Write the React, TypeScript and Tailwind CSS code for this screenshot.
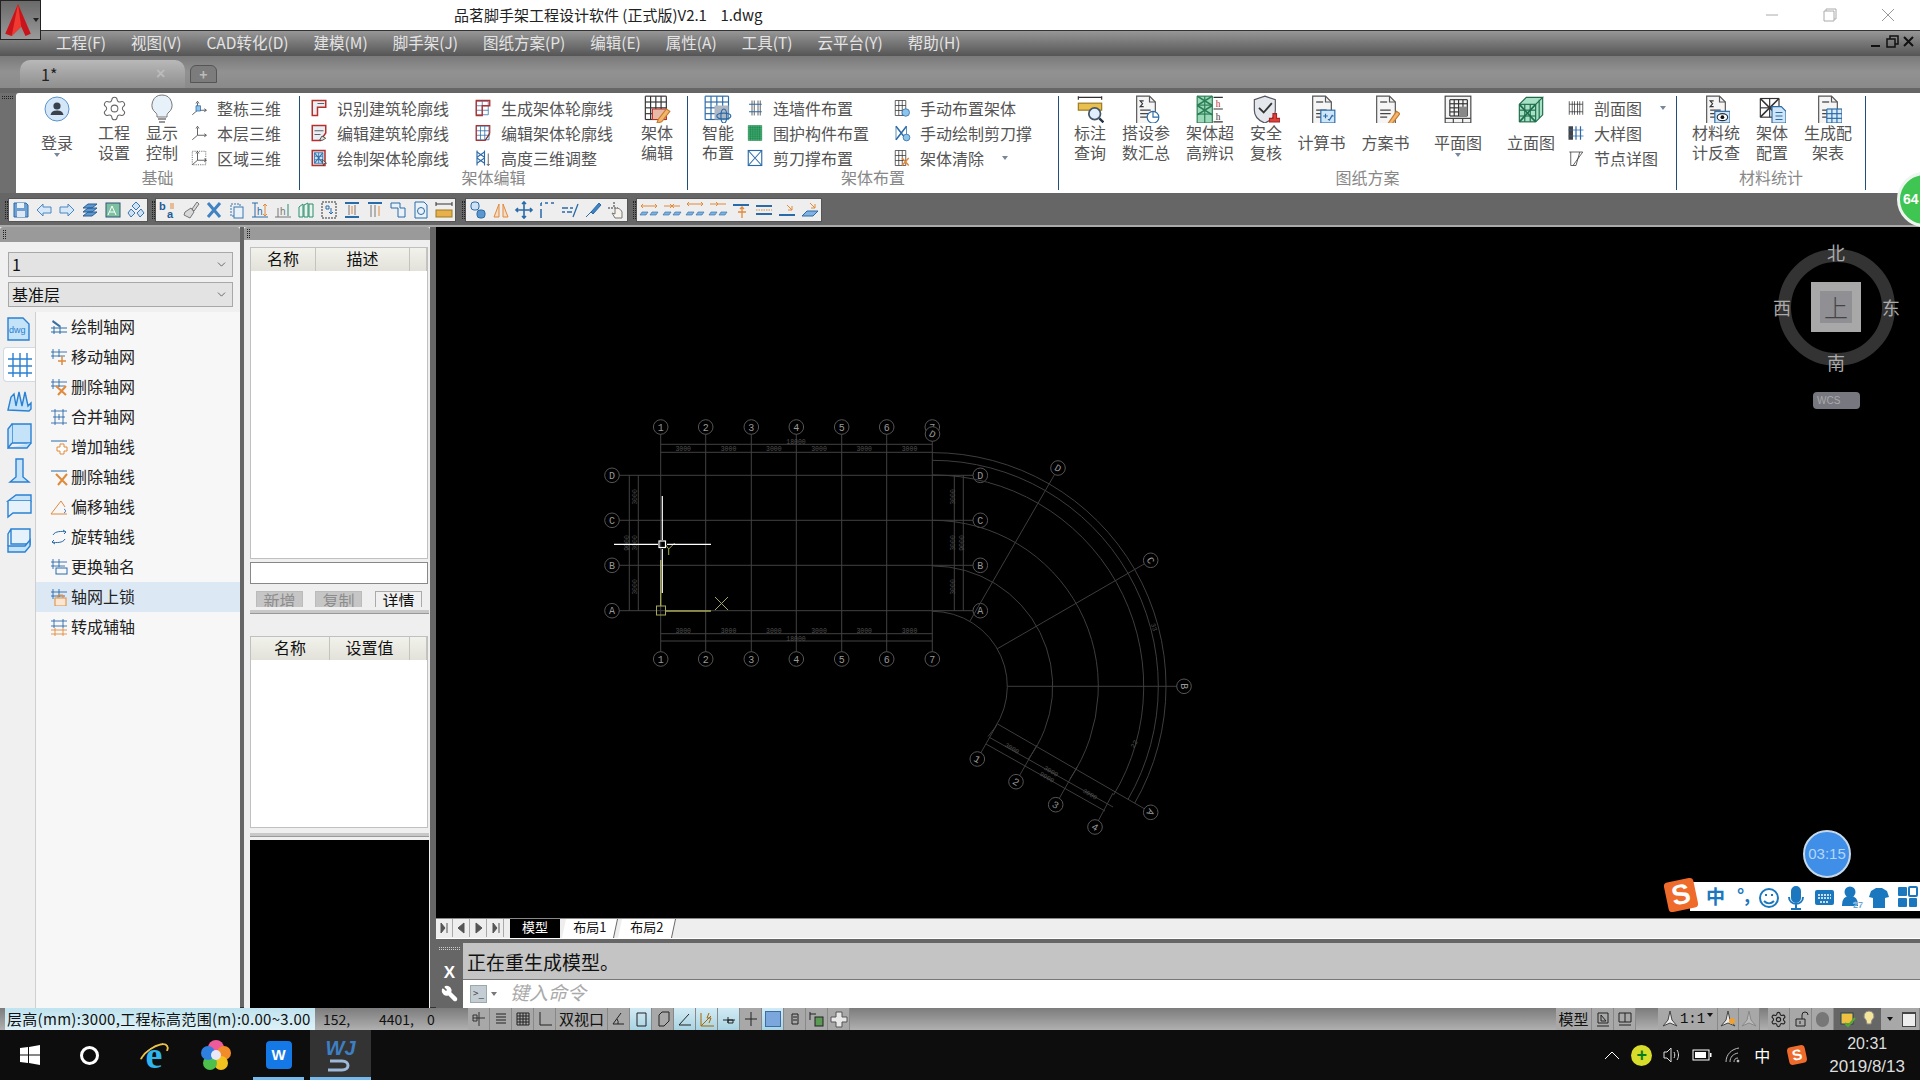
import type { ReactNode } from "react";
import { ChevronDown, Settings, Wrench } from "lucide-react";

const R = "#b5302b";
const B = "#2a6aa8";
const O = "#e08a3c";
const G = "#3fae6e";
const K = "#333";

const S = ({ s = 18, v = 24, children }: { s?: number; v?: number; children: ReactNode }) => (
  <svg width={s} height={s} viewBox={`0 0 ${v} ${v}`} fill="none" className="shrink-0">
    {children}
  </svg>
);

const Grid = ({ x, y, w, h, nx, ny, c = B, sw = 1 }: { x: number; y: number; w: number; h: number; nx: number; ny: number; c?: string; sw?: number }) => (
  <g stroke={c} strokeWidth={sw}>
    {Array.from({ length: nx + 1 }).map((_, i) => (
      <line key={"v" + i} x1={x + (w * i) / nx} x2={x + (w * i) / nx} y1={y} y2={y + h} />
    ))}
    {Array.from({ length: ny + 1 }).map((_, i) => (
      <line key={"h" + i} x1={x} x2={x + w} y1={y + (h * i) / ny} y2={y + (h * i) / ny} />
    ))}
  </g>
);

const Cross = ({ x, y, w, h, c = B }: { x: number; y: number; w: number; h: number; c?: string }) => (
  <path d={`M${x} ${y}L${x + w} ${y + h}M${x + w} ${y}L${x} ${y + h}`} stroke={c} strokeWidth="1.4" />
);

const Doc = ({ sum = false }: { sum?: boolean }) => (
  <>
    <path d="M4 1h11l5 5v19H4z" fill="#f5f5f5" stroke="#555" />
    <path d="M15 1v5h5" stroke="#555" />
    {sum ? <path d="M10 5H7l2 2.5L7 10h3" stroke="#333" /> : <path d="M7 6h6" stroke="#333" />}
    <path d="M7 13h9M7 16h9M7 19h6" stroke="#444" />
  </>
);

const Axes = ({ box = false, dash = false }: { box?: boolean; dash?: boolean }) => (
  <S>
    {dash && <rect x="3" y="3" width="18" height="18" stroke="#444" strokeDasharray="1.5 1.5" />}
    <path d="M10 15V5M10 15h11M10 15l-7 6" stroke={K} />
    <path d="M8 6l2-3 2 3M19 13l3 2-3 2" stroke={K} />
    {box && <path d="M8 9h6v7H8z" fill="#8ec3ea" stroke={B} />}
  </S>
);

const big: Record<string, ReactNode> = {
  login: (
    <svg width="26" height="26" viewBox="0 0 26 26">
      <circle cx="13" cy="13" r="12" fill="#d4e7f8" stroke="#5a92cc" />
      <circle cx="13" cy="10" r="3.6" fill="#39414d" />
      <path d="M6.5 19c1-4 4-4.500 6.500-4.500s5.500.5 6.500 4.500z" fill="#39414d" />
    </svg>
  ),
  gear: <Settings size={27} strokeWidth={0.9} color="#666" />,
  bulb: (
    <svg width="26" height="30" viewBox="0 0 26 30" fill="none">
      <path d="M13 1a10 10 0 0 1 6 18c-1 1-1 2-1 4H8c0-2 0-3-1-4A10 10 0 0 1 13 1z" fill="#e6f1fa" stroke="#777" />
      <path d="M9 25h8M10 28h6" stroke="#777" strokeWidth="1.5" />
    </svg>
  ),
  edit: (
    <S s={28}>
      <Grid x={2} y={1} w={18} h={20} nx={4} ny={4} c={K} />
      <path d="M8 12h12v9H8z" fill="#e9b9a8" stroke={R} />
      <path d="M13 21l7-9 3 2-7 9-4 1z" fill="#f2b56b" stroke="#c77a2c" />
    </S>
  ),
  smart: (
    <S s={28}>
      <Grid x={1} y={1} w={20} h={20} nx={4} ny={4} />
      <rect x="9" y="9" width="12" height="12" fill="#aeb8c4" />
      <ellipse cx="17" cy="18" rx="6" ry="2.500" stroke={B} />
      <ellipse cx="17" cy="18" rx="2.500" ry="6" stroke={B} />
    </S>
  ),
  measure: (
    <S s={28}>
      <path d="M2 2h20M2 1v3M22 1v3" stroke={K} />
      <rect x="2" y="7" width="20" height="6" fill="#e9bf4d" stroke="#9a7a20" />
      <circle cx="16" cy="16" r="5" fill="#dfeefa" stroke="#456" strokeWidth="1.5" />
      <path d="M20 20l3.500 3.500" stroke="#234" strokeWidth="2" />
    </S>
  ),
  params: (
    <S s={28}>
      <Doc sum />
      <circle cx="18" cy="19" r="5" fill="#fff" stroke={B} />
      <path d="M18 14v5h5" stroke={B} />
    </S>
  ),
  high: (
    <S s={28}>
      <rect x="1" y="1" width="13" height="23" fill="#9bd8b8" />
      <Grid x={1} y={1} w={13} h={23} nx={2} ny={3} c="#2b7d55" />
      <Cross x={1} y={1} w={13} h={8} c="#2b7d55" />
      <Cross x={1} y={9} w={13} h={8} c="#2b7d55" />
      <path d="M15 2h8M15 12h8M15 23h8" stroke={K} />
      <text x="17" y="10" fontSize="8" fill={R} fontFamily="Liberation Serif">h</text>
      <text x="17" y="21" fontSize="8" fill={K} fontFamily="Liberation Serif">h</text>
    </S>
  ),
  safe: (
    <S s={28}>
      <path d="M11 1l9 3v9c0 6-4 9-9 11-5-2-9-5-9-11V4z" fill="#e4e8ec" stroke="#556" />
      <path d="M6 11l4 4 7-8" stroke="#333" strokeWidth="1.600" />
      <path d="M15 23h9v-3h-3v-4h-3v4h-3z" fill="#e0403a" stroke="#a22" />
    </S>
  ),
  calc: (
    <S s={28}>
      <Doc />
      <rect x="11" y="13" width="12" height="11" fill="#cfe6f8" stroke={B} />
      <path d="M13 18h4M15 16v4M18 22l3-5M17 21h1M21 18h1" stroke={B} />
    </S>
  ),
  plan: (
    <S s={28}>
      <Doc />
      <path d="M14 24l7-10 3 2-7 9-4 1z" fill="#f2b56b" stroke="#c77a2c" />
    </S>
  ),
  floor: (
    <S s={28}>
      <rect x="1" y="1" width="22" height="23" fill="#f4f4f4" stroke="#444" />
      <Grid x={5} y={4} w={15} h={14} nx={4} ny={4} c="#333" />
      <rect x="13" y="10" width="7" height="8" fill="#888" />
      <path d="M1 20h22M8 20v4M16 20v4" stroke="#444" />
    </S>
  ),
  elev: (
    <S s={28}>
      <path d="M2 8l6-6h14v15l-6 6H2z" fill="#a7e0c5" />
      <Grid x={2} y={8} w={14} h={15} nx={3} ny={3} c="#1e6d4a" />
      <Cross x={2} y={8} w={14} h={15} c="#1e6d4a" />
      <path d="M2 8l6-6h14l-6 6M22 2v15l-6 6M19 4v16" stroke="#1e6d4a" />
    </S>
  ),
  matLook: (
    <S s={28}>
      <Doc sum />
      <rect x="11" y="14" width="13" height="10" fill="#cfe6f8" stroke={B} />
      <ellipse cx="17.500" cy="19" rx="4.500" ry="3" fill="#fff" stroke="#234" />
      <circle cx="17.500" cy="19" r="1.600" fill="#111" />
    </S>
  ),
  rackCfg: (
    <S s={28}>
      <Grid x={2} y={3} w={16} h={16} nx={2} ny={2} c={K} />
      <Cross x={2} y={3} w={16} h={16} c={K} />
      <path d="M12 10h8l4 4v10H12z" fill="#cfe6f8" stroke={B} />
      <path d="M15 15h6M15 18h6M15 21h6" stroke={B} />
    </S>
  ),
  genTable: (
    <S s={28}>
      <Doc />
      <rect x="11" y="12" width="13" height="12" fill="#d7ebfa" />
      <Grid x={11} y={12} w={13} h={12} nx={3} ny={3} />
    </S>
  ),
};

const small: Record<string, ReactNode> = {
  a1: <Axes box />,
  a2: <Axes />,
  a3: <Axes dash />,
  o1: <S><path d="M3 2h18v9H10v11H3z" fill="#e8eef4" stroke={R} strokeWidth="2" /><path d="M10 6h9" stroke={K} /></S>,
  o2: <S><path d="M3 2h18v10l-7 10H3z" fill="#e8eef4" stroke={R} strokeWidth="2" /><path d="M6 9h12M6 14h8" stroke={K} /><path d="M13 21l3-5 5 3-5 3z" fill="#ddd" stroke={K} /></S>,
  o3: <S><rect x="3" y="2" width="17" height="20" fill="#cfe0f0" stroke={R} strokeWidth="2" /><Grid x={6} y={5} w={11} h={14} nx={2} ny={3} /><Cross x={6} y={5} w={11} h={14} /><path d="M16 14l6 5-3 0-1 3z" fill="#fff" stroke={K} /></S>,
  g1: <S><Grid x={3} y={3} w={16} h={18} nx={2} ny={3} /><path d="M3 2h18v7H11v13H3z" stroke={R} strokeWidth="1.800" /></S>,
  g2: <S><Grid x={3} y={3} w={17} h={18} nx={3} ny={3} /><path d="M3 2h18v10l-6 10H3z" stroke={R} strokeWidth="1.600" /><path d="M15 21l6-7" stroke={K} /></S>,
  g3: <S><path d="M4 2v20M14 2v20" stroke={B} strokeWidth="1.500" /><Cross x={4} y={4} w={10} h={7} /><Cross x={4} y={12} w={10} h={7} /><path d="M19 6v16M17 20l2 2 2-2" stroke={K} /></S>,
  w1: <S><path d="M8 2v20M11 2v20M16 2v20M19 2v20" stroke={K} /><path d="M4 7h17M4 17h17" stroke={B} strokeWidth="1.500" /></S>,
  w2: <S><rect x="3" y="2" width="18" height="20" fill={G} /><Grid x={3} y={2} w={18} h={20} nx={6} ny={7} c="#1f7f4c" sw={0.7} /></S>,
  w3: <S><rect x="3" y="2" width="18" height="20" stroke={B} strokeWidth="1.500" /><Cross x={3} y={2} w={18} h={20} /></S>,
  h1: <S><Grid x={3} y={2} w={14} h={20} nx={3} ny={3} c={K} /><circle cx="17" cy="18" r="5" fill="#8ec3ea" stroke={B} /></S>,
  h2: <S><path d="M4 3l14 18M18 3L4 21" stroke={B} strokeWidth="2" /><path d="M4 3v18M18 3v18" stroke={B} /><circle cx="18" cy="18" r="4.500" fill="#8ec3ea" stroke={B} /></S>,
  h3: <S><Grid x={3} y={2} w={14} h={20} nx={3} ny={3} c={K} /><path d="M12 12l9 10M21 12l-9 10" stroke={O} strokeWidth="2" /></S>,
  s1: <S><path d="M3 3v18M7 3v18M10 3v18M14 3v18M17 3v18M21 3v18" stroke={K} /><path d="M3 7h18M3 17h18" stroke={K} /></S>,
  s2: <S><rect x="2" y="3" width="6" height="18" fill="#444" /><path d="M12 3v18M18 3v18" stroke={B} strokeWidth="1.600" /><path d="M2 8h20M2 16h20" stroke={B} /></S>,
  s3: <S><path d="M3 4h18M5 22V4M21 4L8 22M12 22l5-18M5 22h7" stroke={K} /></S>,
};

type BigProps = { w: string; icon: string; lines: string[]; caret?: boolean };
const Big = ({ w, icon, lines, caret }: BigProps) => (
  <div className={`flex flex-col items-center shrink-0 ${w}`}>
    <div className="h-[27px] flex items-center justify-center">{big[icon]}</div>
    <div className={`text-center whitespace-nowrap ${lines.length === 1 ? "mt-[10px]" : ""}`}>
      {lines.map((l) => (
        <div key={l} className="leading-[20px]">{l}</div>
      ))}
    </div>
    {caret && <div className="mt-[1px] w-0 h-0 border-x-[3px] border-x-transparent border-t-[4px] border-t-[#78879b]" />}
  </div>
);

const Col = ({ w, rows }: { w: string; rows: [string, string, boolean?][] }) => (
  <div className={`shrink-0 ${w}`}>
    {rows.map(([ic, t, caret]) => (
      <div key={t} className="h-[25px] flex items-center">
        <div className="w-[18px] flex justify-center">{small[ic]}</div>
        <span className="ml-[9px] whitespace-nowrap">{t}</span>
        {caret && <div className="ml-[18px] w-0 h-0 border-x-[3px] border-x-transparent border-t-[4px] border-t-[#78879b]" />}
      </div>
    ))}
  </div>
);

const Group = ({ w, pl, label, children }: { w: string; pl: string; label: string; children: ReactNode }) => (
  <div className={`my-[3px] border-r border-[#1f4f7e] shrink-0 ${w}`}>
    <div className={`flex h-[75px] -mt-[1px] ${pl}`}>{children}</div>
    <div className="h-[14px] leading-[14px] text-center text-[#888]">{label}</div>
  </div>
);

const Ribbon = () => (
  <div className="h-[100px] flex bg-[#6f6f6f]">
    <div className="w-[16px] shrink-0 pt-[3px] pl-[2px]">
      <div className="w-[11px] h-[3px] border-y border-dotted border-[#222]" />
    </div>
    <div className="flex-1 flex bg-white rounded-tl-[3px] text-[16px] text-[#555]">
      <Group w="w-[284px]" pl="pl-[9px]" label="基础">
        <Big w="w-[64px]" icon="login" lines={["登录"]} caret />
        <Big w="w-[50px]" icon="gear" lines={["工程", "设置"]} />
        <Big w="w-[46px]" icon="bulb" lines={["显示", "控制"]} />
        <div className="ml-[5px]">
          <Col w="w-[100px]" rows={[["a1", "整栋三维"], ["a2", "本层三维"], ["a3", "区域三维"]]} />
        </div>
      </Group>
      <Group w="w-[388px]" pl="pl-[10px]" label="架体编辑">
        <Col w="w-[164px]" rows={[["o1", "识别建筑轮廓线"], ["o2", "编辑建筑轮廓线"], ["o3", "绘制架体轮廓线"]]} />
        <Col w="w-[158px]" rows={[["g1", "生成架体轮廓线"], ["g2", "编辑架体轮廓线"], ["g3", "高度三维调整"]]} />
        <Big w="w-[50px]" icon="edit" lines={["架体", "编辑"]} />
      </Group>
      <Group w="w-[371px]" pl="pl-[7px]" label="架体布置">
        <Big w="w-[46px]" icon="smart" lines={["智能", "布置"]} />
        <div className="ml-[5px]">
          <Col w="w-[147px]" rows={[["w1", "连墙件布置"], ["w2", "围护构件布置"], ["w3", "剪刀撑布置"]]} />
        </div>
        <Col w="w-[160px]" rows={[["h1", "手动布置架体"], ["h2", "手动绘制剪刀撑"], ["h3", "架体清除", true]]} />
      </Group>
      <Group w="w-[618px]" pl="pl-[3px]" label="图纸方案">
        <Big w="w-[56px]" icon="measure" lines={["标注", "查询"]} />
        <Big w="w-[56px]" icon="params" lines={["搭设参", "数汇总"]} />
        <Big w="w-[72px]" icon="high" lines={["架体超", "高辨识"]} />
        <Big w="w-[40px]" icon="safe" lines={["安全", "复核"]} />
        <Big w="w-[71px]" icon="calc" lines={["计算书"]} />
        <Big w="w-[57px]" icon="plan" lines={["方案书"]} />
        <Big w="w-[88px]" icon="floor" lines={["平面图"]} caret />
        <Big w="w-[58px]" icon="elev" lines={["立面图"]} />
        <div className="ml-[7px]">
          <Col w="w-[105px]" rows={[["s1", "剖面图", true], ["s2", "大样图"], ["s3", "节点详图"]]} />
        </div>
      </Group>
      <Group w="w-[189px]" pl="pl-[3px]" label="材料统计">
        <Big w="w-[72px]" icon="matLook" lines={["材料统", "计反查"]} />
        <Big w="w-[40px]" icon="rackCfg" lines={["架体", "配置"]} />
        <Big w="w-[72px]" icon="genTable" lines={["生成配", "架表"]} />
      </Group>
    </div>
  </div>
);

const T = ({ children }: { children: ReactNode }) => (
  <div className="w-[23px] h-[22px] flex justify-center items-center shrink-0">
    <svg width="20" height="20" viewBox="0 0 20 20" fill="none">{children}</svg>
  </div>
);

const dimRow = (top: ReactNode) => (
  <T>
    {top}
    <path d="M1 15l2-3h6l-2 3zM11 15l2-3h6l-2 3z" fill="#7fb2e0" stroke={B} strokeWidth="0.600" />
  </T>
);

const tools: ReactNode[][] = [
  [
    <T><path d="M3 3h12l2 2v12H3z" fill="#6f9ed0" stroke={B} /><rect x="6" y="3" width="7" height="5" fill="#e8f0f8" /><rect x="6" y="11" width="8" height="6" fill="#dfe8f2" /></T>,
    <T><path d="M9 4L3 10l6 6v-3h8V7H9z" fill="#d6e8f8" stroke="#4a86c0" /></T>,
    <T><path d="M11 4l6 6-6 6v-3H3V7h8z" fill="#d6e8f8" stroke="#4a86c0" /></T>,
    <T><path d="M3 8l5-4h9l-5 4zM3 12l5-4h9l-5 4zM3 16l5-4h9l-5 4z" fill="#5b96cf" stroke="#2a5f94" /></T>,
    <T><rect x="3" y="3" width="14" height="14" fill="#7cc2a0" stroke="#357" /><path d="M5 15l4-9 4 9M7 12h5" stroke="#fff" /></T>,
    <T><path d="M10 2l4 4-4 4-4-4zM5 9l4 4-4 4-3-4zM15 9l3 4-4 4-3-4z" fill="#cfe2f4" stroke="#3a76b0" /></T>,
  ],
  [
    <T><text x="1" y="10" fontSize="11" fill="#1f5c96" fontWeight="700" fontFamily="Liberation Sans">b</text><text x="9" y="18" fontSize="11" fill="#1f5c96" fontWeight="700" fontFamily="Liberation Sans">a</text><path d="M13 3v6M15 3v6" stroke={O} /></T>,
    <T><path d="M11 9l5-7 2 2-5 7zM4 12l6-4 3 4-4 6-6-3z" fill="#d8d8d8" stroke="#777" /></T>,
    <T><path d="M4 3l12 14M16 3L4 17" stroke="#3f83c2" strokeWidth="3" /></T>,
    <T><rect x="4" y="4" width="9" height="12" stroke="#3a76b0" strokeDasharray="2 1" /><rect x="7" y="7" width="9" height="11" fill="#eaf2f9" stroke="#3a76b0" /></T>,
    <T><path d="M2 3h6M2 17h16M5 3v14" stroke={B} /><text x="7" y="15" fontSize="10" fill={B} fontFamily="Liberation Sans">h</text><path d="M15 4v12M13 6l2-2 2 2M13 14l2 2 2-2" stroke={O} /></T>,
    <T><path d="M2 17h16M5 8v9" stroke="#777" /><text x="7" y="15" fontSize="10" fill="#777" fontFamily="Liberation Sans">h</text><path d="M15 4v12" stroke="#2b8d6e" /></T>,
    <T><path d="M3 7l4-3v13H3zM8 5l4-2v14H8zM13 4h4v13h-4z" fill="#e8f4ec" stroke="#2b8d6e" /></T>,
    <T><rect x="3" y="2" width="14" height="16" stroke="#333" strokeDasharray="2 1" /><path d="M7 6h3v3H7zM12 8v6M10 12l2 2 2-2" stroke={B} /></T>,
    <T><path d="M3 3h14M3 17h14" stroke={B} strokeWidth="2" /><path d="M7 5v10M13 5v10" stroke="#777" /><path d="M10 6v8" stroke={O} /></T>,
    <T><path d="M3 3h14" stroke={B} strokeWidth="2" /><path d="M6 5v12M10 5v12" stroke="#777" /><path d="M14 6v10" stroke={O} /></T>,
    <T><path d="M3 3h9v5h5v9h-7v-9H3z" fill="#eaf2f9" stroke={B} /></T>,
    <T><path d="M4 2h9l3 3v13H4z" fill="#eaf2f9" stroke={B} /><circle cx="10" cy="11" r="3.500" stroke={B} /></T>,
    <T><rect x="2" y="10" width="16" height="7" fill="#e8b04d" stroke="#9a7a20" /><path d="M2 4h16M2 2v4M18 2v4" stroke={K} /></T>,
  ],
  [
    <T><rect x="3" y="2" width="8" height="8" rx="3" fill="#cfe2f4" stroke={B} /><rect x="9" y="10" width="8" height="8" rx="3" fill="#5b96cf" stroke={B} /></T>,
    <T><path d="M8 4L3 17h5zM12 4l5 13h-5z" fill="#f6dcc0" stroke={O} /></T>,
    <T><path d="M10 2v16M2 10h16M8 4l2-2 2 2M8 16l2 2 2-2M4 8l-2 2 2 2M16 8l2 2-2 2" stroke="#2a6aa8" strokeWidth="1.600" /></T>,
    <T><path d="M4 18V9M4 6V3M8 3h3M14 3h3M4 3h1" stroke={B} strokeWidth="1.500" /></T>,
    <T><path d="M2 8h6M10 8h3M2 12h3M7 12h5M13 17l5-13" stroke={B} strokeWidth="1.300" /></T>,
    <T><path d="M3 17l5-5M8 12l8-9 2 2-8 9z" fill="#3f83c2" stroke={B} /></T>,
    <T><path d="M8 2v6M2 8h10" stroke={K} strokeDasharray="2 1" /><path d="M9 9c2-2 6 0 7 3v6H9l-3-5 3 1z" fill="#f8f3ea" stroke="#777" /></T>,
  ],
  [
    dimRow(<path d="M2 6h16M4 4L2 6l2 2M16 4l2 2-2 2" stroke={O} />),
    dimRow(<path d="M2 6h16M8 4l2 2-2 2M12 4l-2 2 2 2" stroke={O} />),
    dimRow(<path d="M2 4h16M4 2L2 4l2 2M16 2l2 2-2 2" stroke={O} />),
    dimRow(<path d="M2 4h16M8 2l2 2-2 2" stroke={O} />),
    <T><path d="M2 5h16" stroke={B} strokeWidth="2" /><path d="M11 7v11M7 12h8M9 9l2-2 2 2" stroke={O} strokeWidth="1.300" /></T>,
    <T><path d="M2 6h16M2 14h16" stroke={B} strokeWidth="2" /><path d="M2 10h16" stroke={O} strokeDasharray="1.500 1" /></T>,
    <T><path d="M2 15h16" stroke={B} strokeWidth="2" /><path d="M10 5l5 5M15 6v4h-4" stroke={O} /></T>,
    <T><path d="M2 16l5-5h11l-5 5z" fill="#7fb2e0" stroke={B} /><path d="M10 3l5 5M15 4v4h-4" stroke={O} /></T>,
  ],
];

const Grip = () => (
  <div className="w-[6px] h-[22px] flex justify-center items-center shrink-0">
    <div className="w-[3px] h-[18px] border-x border-dotted border-[#222]" />
  </div>
);

const Toolbars = () => (
  <div className="h-[32px] bg-[#666] pt-[6px] flex pl-[3px]">
    {tools.map((seg, i) => (
      <div key={i} className={`flex ${["", "ml-[3px]", "ml-[5px]", "ml-[4px]"][i]}`}>
        <Grip />
        <div className="h-[22px] flex bg-[#eeeeee] shadow-[0_0_0_1px_#555]">
          {seg.map((t, j) => (
            <div key={j}>{t}</div>
          ))}
        </div>
      </div>
    ))}
  </div>
);

const Select = ({ text }: { text: string }) => (
  <div className="h-[25px] mx-[8px] w-[225px] bg-[#e3e3e3] border border-[#a8a8a8] flex items-center justify-between pl-[3px] pr-[4px] text-[16px] text-[#111]">
    <span className="pb-[2px]">{text}</span>
    <ChevronDown size={13} color="#444" strokeWidth={1.4} />
  </div>
);

const Side = ({ active, children }: { active?: boolean; children: ReactNode }) => (
  <div className={`h-[35px] flex items-center justify-center ${active ? "bg-white border border-r-0 border-[#cfdbe6] rounded-l-[4px]" : ""}`}>
    <svg width="28" height="28" viewBox="0 0 28 28" fill="#c4e2f8" stroke="#2a80d2" strokeWidth="1.400">{children}</svg>
  </div>
);

const sideIcons: ReactNode[] = [
  <><path d="M3 2h15l6 6v16H3z" /><text x="4" y="17" fontSize="9" fill="#2a80d2" stroke="none" fontFamily="Liberation Sans">dwg</text></>,
  <path d="M2 8h24M2 15h24M2 22h24M7 2v24M14 2v24M21 2v24" fill="none" />,
  <path d="M3 24l3-13 3-3 2 12 3-14 3 14 3-14 3 14 3-3v6l-2 2z" />,
  <><path d="M7 3h19v19H7z" /><path d="M7 3L3 8v19l4-5M3 27h19l4-5" /></>,
  <path d="M11 3h7v18l6 5H5l6-5z" />,
  <><path d="M3 10l8-6h15v6l-23 0z" /><path d="M3 10v16l5-4h18V10" fill="#e6f2fb" /></>,
  <><path d="M6 3h19v15H6zM6 3L3 8v12" fill="#e6f2fb" /><path d="M3 20h17l5-6v6l-5 6H3z" /></>,
];

const listIcon = (accent: ReactNode, lines = true) => (
  <svg width="18" height="18" viewBox="0 0 18 18" fill="none">
    {lines && <path d="M1 4h16M1 8h14M3 1v10M9 1v8" stroke={B} strokeWidth="0.900" />}
    {accent}
  </svg>
);

const listItems: [string, ReactNode][] = [
  ["绘制轴网", <svg width="18" height="18" viewBox="0 0 18 18" fill="none"><path d="M1 10h16M1 14h16M4 8v8M10 8v8" stroke={B} /><path d="M3 2l8 6-2 1-7-5z" fill="#3b6fa0" /></svg>],
  ["移动轴网", listIcon(<path d="M12 8v9M8 13h8" stroke={O} strokeWidth="1.500" />)],
  ["删除轴网", listIcon(<path d="M6 8l10 9M16 8l-8 9" stroke={O} strokeWidth="2" />)],
  ["合并轴网", <svg width="18" height="18" viewBox="0 0 18 18" fill="none"><path d="M1 3h16M1 15h16M5 1v16M13 1v16M3 9h12M9 6v6" stroke={B} strokeWidth="0.900" /></svg>],
  ["增加轴线", <svg width="18" height="18" viewBox="0 0 18 18" fill="none"><path d="M1 3h16" stroke={B} /><path d="M10 6h4v3h3v4h-3v3h-4v-3H7V9h3z" fill="#fff" stroke={O} /></svg>],
  ["删除轴线", <svg width="18" height="18" viewBox="0 0 18 18" fill="none"><path d="M1 3h16" stroke={B} /><path d="M6 6l11 11M17 6L8 17" stroke={O} strokeWidth="2" /></svg>],
  ["偏移轴线", <svg width="18" height="18" viewBox="0 0 18 18" fill="none"><path d="M1 16L11 3l4 6M1 16h16" stroke={O} /><path d="M14 11c2 1 2 3 0 4" stroke={B} /></svg>],
  ["旋转轴线", <svg width="18" height="18" viewBox="0 0 18 18" fill="none"><path d="M3 7c2-4 9-4 13-3M15 11c-2 4-9 4-13 3" stroke={B} /><path d="M13 2l3 2-2 2M5 16l-3-2 2-2" stroke={B} /></svg>],
  ["更换轴名", listIcon(<rect x="6" y="10" width="11" height="6" stroke={B} />)],
  ["轴网上锁", listIcon(<><rect x="5" y="10" width="11" height="8" fill="#fbe6d2" stroke={O} /><path d="M8 10V7h5v3" stroke={O} /></>)],
  ["转成辅轴", <svg width="18" height="18" viewBox="0 0 18 18" fill="none"><path d="M1 3h16M1 8h16M4 1v9M13 1v9" stroke={B} strokeWidth="0.900" /><path d="M1 12h16M1 16h16M5 10v8M13 10v8" stroke={O} strokeWidth="0.900" /></svg>],
];

const LeftPanel = () => (
  <div className="w-[240px] shrink-0 flex flex-col bg-[#f0f0f0]">
    <div className="h-[15px] bg-[#9a9a9a] rounded-t-[3px] pl-[3px] pt-[3px] shrink-0">
      <div className="w-[3px] h-[9px] border-x border-dotted border-[#222]" />
    </div>
    <div className="pt-[10px] flex flex-col gap-[5px] shrink-0">
      <Select text="1" />
      <Select text="基准层" />
    </div>
    <div className="flex-1 flex mt-[5px] min-h-0">
      <div className="w-[36px] shrink-0 pl-[3px] border-r border-[#cfcfcf] flex flex-col">
        {sideIcons.map((ic, i) => (
          <Side key={i} active={i === 1}>{ic}</Side>
        ))}
      </div>
      <div className="flex-1 bg-[#f7f7f7] pb-[4px] text-[16px] text-[#222]">
        {listItems.map(([t, ic], i) => (
          <div key={t} className={`h-[30px] flex items-center pl-[14px] gap-[3px] ${i === 9 ? "bg-[#dce9f5]" : ""}`}>
            <span className="w-[18px] flex justify-center">{ic}</span>
            <span className="pb-[2px]">{t}</span>
          </div>
        ))}
      </div>
    </div>
  </div>
);

const HeadCell = ({ w, t }: { w: string; t?: string }) => (
  <div className={`h-[23px] shrink-0 flex items-center justify-center border-r border-[#c4c4bc] bg-gradient-to-b from-[#f2f2ec] to-[#e2e2da] text-[#111] leading-none pb-[3px] ${w}`}>
    {t}
  </div>
);

const Bar = () => <div className="h-[4px] ml-[6px] mr-[1px] bg-[#c8c8c8] border-b border-[#999]" />;

const MidPanel = () => (
  <div className="w-[186px] ml-[4px] shrink-0 flex flex-col bg-[#efefef] text-[16px]">
    <div className="h-[13px] bg-[#9a9a9a] rounded-t-[3px] pl-[3px] pt-[2px] shrink-0">
      <div className="w-[3px] h-[9px] border-x border-dotted border-[#222]" />
    </div>
    <div className="mt-[7px] ml-[6px] mr-[2px] h-[312px] bg-white border border-[#c0c0c0] flex flex-col shrink-0">
      <div className="flex">
        <HeadCell w="w-[65px]" t="名称" />
        <HeadCell w="w-[94px]" t="描述" />
        <HeadCell w="w-[17px]" />
      </div>
    </div>
    <div className="mt-[3px] ml-[6px] mr-[2px] h-[22px] bg-white border border-[#888] shrink-0" />
    <div className="mt-[7px] h-[16px] flex pl-[12px] overflow-hidden shrink-0">
      <div className="w-[47px] h-[22px] bg-[#c6c6c6] text-[#8c8c8c] border border-[#bbb] text-center leading-[17px]">新增</div>
      <div className="ml-[12px] w-[47px] h-[22px] bg-[#c6c6c6] text-[#8c8c8c] border border-[#bbb] text-center leading-[17px]">复制</div>
      <div className="ml-[13px] w-[47px] h-[22px] bg-[#f0f0f0] text-[#111] border border-[#aaa] text-center leading-[17px]">详情</div>
    </div>
    <div className="mt-[3px] shrink-0"><Bar /></div>
    <div className="mt-[22px] ml-[6px] mr-[2px] h-[192px] bg-white border border-[#c0c0c0] shrink-0">
      <div className="flex">
        <HeadCell w="w-[79px]" t="名称" />
        <HeadCell w="w-[80px]" t="设置值" />
        <HeadCell w="w-[17px]" />
      </div>
    </div>
    <div className="mt-[5px] shrink-0"><Bar /></div>
    <div className="mt-[3px] ml-[6px] mr-[1px] flex-1 bg-black" />
  </div>
);

const cx = 932.3;
const cy = 686.3;
const pt = (r: number, deg: number): [number, number] => [cx + r * Math.cos((deg * Math.PI) / 180), cy - r * Math.sin((deg * Math.PI) / 180)];
const arc = (r: number, a0: number, a1: number) => {
  const [x0, y0] = pt(r, a0);
  const [x1, y1] = pt(r, a1);
  return `M${x0} ${y0}A${r} ${r} 0 0 1 ${x1} ${y1}`;
};

const Bubble = ({ x, y, t, rot = 0 }: { x: number; y: number; t: string; rot?: number }) => (
  <g>
    <circle cx={x} cy={y} r="7.300" stroke="#555" fill="#000" />
    <text x={x} y={y + 3.500} textAnchor="middle" fontSize="10" fill="#999" stroke="none" fontFamily="Liberation Mono" transform={rot ? `rotate(${rot} ${x} ${y})` : undefined}>{t}</text>
  </g>
);

const colsX = [660.7, 705.7, 751.3, 796.3, 841.7, 886.7, 932.3];
const rowsY: [string, number][] = [["D", 475.3], ["C", 520.3], ["B", 565.3], ["A", 610.7]];

const Dim = ({ x, y, t, rot = 0 }: { x: number; y: number; t: string; rot?: number }) => (
  <text x={x} y={y} textAnchor="middle" fontSize="6.500" fill="#505050" stroke="none" fontFamily="Liberation Mono" transform={rot ? `rotate(${rot} ${x} ${y})` : undefined}>{t}</text>
);

const Drawing = () => (
  <svg className="absolute inset-0" width="1484" height="691" viewBox="436 227 1484 691" fill="none" stroke="#424242" strokeWidth="1">
    {colsX.map((x) => <line key={x} x1={x} x2={x} y1={434} y2={652} />)}
    {rowsY.map(([, y]) => <line key={y} x1={619} x2={973} y1={y} y2={y} />)}
    <path d="M660.7 444.300H932.300M660.7 452.300H932.300M660.7 633.700H932.300M660.7 641H932.300M629.300 475V611M638.300 475V611M954.300 475V611M963.300 475V611" />
    {colsX.map((x, i) => (
      <g key={i}>
        <Bubble x={x} y={427} t={String(i + 1)} />
        <Bubble x={x} y={659} t={String(i + 1)} />
      </g>
    ))}
    <Bubble x={932.5} y={434} t="D" rot={30} />
    {rowsY.map(([n, y]) => (
      <g key={n}>
        <Bubble x={612} y={y} t={n} />
        <Bubble x={980.3} y={y} t={n} />
      </g>
    ))}
    {colsX.slice(0, 6).map((x, i) => (
      <g key={i}>
        <Dim x={(x + colsX[i + 1]) / 2} y={451} t="3000" />
        <Dim x={(x + colsX[i + 1]) / 2} y={633} t="3000" />
      </g>
    ))}
    <Dim x={796} y={444} t="18000" />
    <Dim x={796} y={641} t="18000" />
    {[497, 543, 587].map((y) => (
      <g key={y}>
        <Dim x={637} y={y} t="3000" rot={-90} />
        <Dim x={955} y={y} t="3000" rot={-90} />
      </g>
    ))}
    <Dim x={629} y={543} t="9000" rot={-90} />
    <Dim x={964} y={543} t="9000" rot={-90} />

    <g stroke="#3e3e3e">
      <path d={arc(75, 90, -42)} />
      <path d={arc(120.4, 90, -37)} />
      <path d={arc(166, 90, -34)} />
      <path d={arc(211.4, 90, -31)} />
      <path d={arc(226, 90, -30)} />
      <path d={arc(233.7, 90, -30)} />
      {[60, 30, 0, -30].map((a) => {
        const [x0, y0] = pt(75, a);
        const [x1, y1] = pt(245, a);
        return <line key={a} x1={x0} y1={y0} x2={x1} y2={y1} />;
      })}
      <path d="M977.300 759L996.700 725M1016 781.700L1037 745M1055.700 804.700L1077 767M1095 827L1113 793M990 737.700L1113 807M986 744L1105 811" />
    </g>
    <Bubble x={1058} y={468} t="D" rot={30} />
    <Bubble x={1150.7} y={560.3} t="C" rot={60} />
    <Bubble x={1184} y={686.3} t="B" rot={90} />
    <Bubble x={1150.7} y={812.3} t="A" rot={120} />
    <Bubble x={977.3} y={759} t="1" rot={30} />
    <Bubble x={1016} y={781.7} t="2" rot={30} />
    <Bubble x={1055.7} y={804.7} t="3" rot={30} />
    <Bubble x={1095} y={827} t="4" rot={30} />
    <Dim x={1011} y={750} t="3000" rot={30} />
    <Dim x={1050} y={773} t="3000" rot={30} />
    <Dim x={1089} y={796} t="3000" rot={30} />
    <Dim x={1046} y={779} t="9000" rot={30} />
    <Dim x={1152} y={628} t="33" rot={70} />
    <Dim x={1136} y={745} t="22" rot={-60} />

    <g stroke="#a8a85a">
      <rect x="656.500" y="606" width="9" height="9" />
      <path d="M665 611h46M660.700 606v-46" strokeWidth="1.300" />
      <path d="M715 597l13 13M728 597l-13 13" />
      <path d="M668.700 555v-6l-3-4M668.700 549l6-6" />
    </g>
    <g stroke="#fff" strokeWidth="1.200">
      <path d="M614 544.300h44M667 544.300h44M662.300 496v44M662.300 549v44" />
      <rect x="659" y="541" width="6.500" height="6.500" />
    </g>
  </svg>
);

const ViewCube = () => (
  <div className="absolute left-[1766px] top-[232px] w-[142px] h-[182px]">
    <div className="absolute left-[12px] top-[17px] w-[117px] h-[117px] rounded-full border-[13px] border-[#333]" />
    <div className="absolute left-[45px] top-[50px] w-[50px] h-[50px] bg-[#a8a8a8] flex items-center justify-center">
      <div className="w-[32px] h-[32px] bg-[#8f8f94] flex items-center justify-center text-[24px] leading-none text-[#444] font-light">上</div>
    </div>
    <span className="absolute left-[61px] top-[9px] text-[18px] leading-[22px] text-[#aaa]">北</span>
    <span className="absolute left-[61px] top-[119px] text-[18px] leading-[22px] text-[#aaa]">南</span>
    <span className="absolute left-[7px] top-[64px] text-[18px] leading-[22px] text-[#aaa]">西</span>
    <span className="absolute left-[116px] top-[64px] text-[18px] leading-[22px] text-[#aaa]">东</span>
    <div className="absolute left-[47px] top-[160px] w-[47px] h-[17px] rounded-[4px] bg-[#77777f] text-[10px] leading-[17px] pl-[4px] text-[#aaa] font-['Liberation_Sans',sans-serif]">WCS</div>
  </div>
);

const SogouS = ({ size, text }: { size: string; text: string }) => (
  <div className={`rotate-[-12deg] rounded-[4px] bg-[#ee6b2b] flex items-center justify-center text-white font-bold font-['Liberation_Sans',sans-serif] ${size} ${text}`}>S</div>
);

const SogouBar = () => (
  <div className="absolute left-[1666px] top-[878px] w-[254px] h-[34px] flex items-center">
    <div className="absolute left-[24px] top-[4px] right-0 h-[29px] bg-white" />
    <div className="relative"><SogouS size="w-[30px] h-[30px]" text="text-[28px] leading-[30px]" /></div>
    <svg className="absolute left-0 top-0" width="254" height="34" viewBox="0 0 254 34" fill="none" stroke="#1c78be" strokeWidth="2">
      <text x="40" y="26" fontSize="19" fontWeight="700" fill="#1c78be" stroke="none">中</text>
      <text x="71" y="24" fontSize="18" fontWeight="700" fill="#1c78be" stroke="none">°,</text>
      <circle cx="103" cy="20" r="9" />
      <path d="M98 23c3 3 7 3 10 0M100 16v2M106 16v2" />
      <rect x="126" y="9" width="8" height="15" rx="4" fill="#1c78be" />
      <path d="M123 19c0 9 14 9 14 0M130 26v4M125 31h10" />
      <rect x="149" y="12" width="19" height="15" rx="2" fill="#1c78be" stroke="none" />
      <path d="M152 17h13M152 20h13M154 24h9" stroke="#fff" strokeWidth="1.500" strokeDasharray="2 1" />
      <circle cx="184" cy="14" r="4.500" fill="#1c78be" />
      <path d="M177 27c0-7 4-8 7-8s7 1 7 8z" fill="#1c78be" />
      <text x="187" y="30" fontSize="9" fontWeight="700" fill="#1c78be" stroke="#fff" strokeWidth="0.300" fontFamily="Liberation Sans">27</text>
      <path d="M205 13l5-3h6l5 3 2 6-4 1v10h-12V20l-4-1z" fill="#1c78be" stroke="none" />
      <rect x="232" y="9" width="9" height="9" rx="1" fill="#1c78be" stroke="none" />
      <rect x="243" y="9" width="8" height="9" rx="1" fill="#fff" />
      <rect x="232" y="20" width="9" height="9" rx="1" fill="#1c78be" stroke="none" />
      <rect x="243" y="20" width="8" height="9" rx="1" fill="#1c78be" stroke="none" />
    </svg>
  </div>
);

const LayoutTabs = () => (
  <div className="h-[20px] bg-[#eeeeee] border-t border-[#888] flex items-start text-[13px] text-[#111]">
    <div className="flex shrink-0">
      {["M9 3v10M7 8l-4-5v10z", "M9 3v10L3 8z", "M4 3v10l6-5z", "M4 3l4 5-4 5zM10 3v10"].map((d) => (
        <div key={d} className="w-[17px] h-[18px] border-r border-[#aaa] flex items-center justify-center">
          <svg width="12" height="16" viewBox="0 0 12 16"><path d={d} fill="#555" stroke="#555" /></svg>
        </div>
      ))}
    </div>
    <div className="ml-[6px] w-[50px] h-[19px] bg-black text-white text-center leading-[16px]">模型</div>
    <div className="ml-[4px] w-[52px] h-[19px] bg-white border-r border-[#666] text-center leading-[16px] -skew-x-12"><div className="skew-x-12">布局1</div></div>
    <div className="ml-[4px] w-[54px] h-[19px] bg-white border-r border-[#666] text-center leading-[16px] -skew-x-12"><div className="skew-x-12">布局2</div></div>
  </div>
);

const CommandLine = () => (
  <div className="flex h-[65px]">
    <div className="w-[27px] bg-[#666] shrink-0 flex flex-col items-center pt-[4px]">
      <div className="w-[21px] h-[3px] border-y border-dotted border-[#ccc]" />
      <span className="mt-[13px] text-white font-bold text-[17px] leading-[20px] font-['Liberation_Sans',sans-serif]">X</span>
      <Wrench size={17} color="#fff" fill="#fff" className="mt-[2px] -scale-x-100" />
    </div>
    <div className="flex-1 flex flex-col">
      <div className="h-[37px] bg-[#c4c4c4] border-b border-[#777] pl-[4px] text-[19px] leading-[38px] text-[#111]">正在重生成模型。</div>
      <div className="h-[28px] bg-white flex items-center pl-[7px]">
        <div className="w-[17px] h-[18px] bg-[#c4cdd4] border border-[#9aa] text-[10px] leading-[14px] text-[#444] text-center">&gt;_</div>
        <div className="ml-[4px] w-0 h-0 border-x-[3px] border-x-transparent border-t-[4px] border-t-[#777]" />
        <span className="ml-[13px] italic text-[19px] leading-[24px] pb-[4px] text-[#aaa]">键入命令</span>
      </div>
    </div>
  </div>
);

const Cell = ({ w, on, children }: { w: string; on?: boolean; children?: ReactNode }) => (
  <div className={`h-[22px] shrink-0 flex items-center justify-center border-r border-[#888] ${w} ${on ? "bg-gradient-to-b from-[#d2ebf5] to-[#a9d3e2]" : "bg-[#a8a8a8]"}`}>
    {children}
  </div>
);

const si = (d: string, c = "#222") => (
  <svg width="18" height="18" viewBox="0 0 18 18" fill="none"><path d={d} stroke={c} /></svg>
);

const StatusBar = () => (
  <div className="h-[22px] flex bg-gradient-to-b from-[#7c7c7c] to-[#b0b0b0] text-[15px] leading-[22px] text-[#111] overflow-hidden">
    <div className="ml-[5px] w-[310px] shrink-0 bg-gradient-to-b from-[#bfe3ef] to-[#dff2f7] whitespace-nowrap pl-[2px] text-[15px] tracking-[0.3px]">层高(mm):3000,工程标高范围(m):0.00~3.00</div>
    <div className="w-[153px] shrink-0 pl-[8px] flex text-[14px] whitespace-nowrap">
      <span className="w-[56px]">152,</span>
      <span className="w-[48px]">4401,</span>
      <span>0</span>
    </div>
    <Cell w="w-[22px]">{si("M9 2v14M3 8h12M3 5h4v6H3z", "#333")}</Cell>
    <Cell w="w-[22px]">{si("M4 4h10M4 7h10M4 10h10M4 13h10")}</Cell>
    <Cell w="w-[22px]">{si("M3 3h12v12H3zM3 6h12M3 9h12M3 12h12M6 3v12M9 3v12M12 3v12")}</Cell>
    <Cell w="w-[22px]">{si("M4 2v13h12")}</Cell>
    <Cell w="w-[52px]"><span className="text-[15px]">双视口</span></Cell>
    <Cell w="w-[22px]">{si("M14 14H3l8-11M8 14a6 6 0 0 0-1-5")}</Cell>
    <Cell w="w-[22px]" on>{si("M5 3h9v13H5z")}</Cell>
    <Cell w="w-[22px]">{si("M5 5l3-3h7v9l-5 5H5z")}</Cell>
    <Cell w="w-[22px]" on>{si("M3 15L13 4M3 15h12")}</Cell>
    <Cell w="w-[22px]" on>{si("M3 3v13h13M3 16l10-10M11 3l-2 5h4l-2 5", "#a60")}</Cell>
    <Cell w="w-[22px]" on>{si("M3 10h12M8 7v6M8 10h5v3H8z")}</Cell>
    <Cell w="w-[22px]">{si("M9 2v14M3 9h12")}</Cell>
    <Cell w="w-[22px]" on><div className="w-[16px] h-[16px] bg-[#7ba7dc] border border-[#3a6ea8]" /></Cell>
    <Cell w="w-[22px]">{si("M6 4h6v10H6zM7 7h4M7 10h4")}</Cell>
    <Cell w="w-[22px]"><svg width="18" height="18" viewBox="0 0 18 18" fill="none"><path d="M2 2v8M2 4h6" stroke="#222" /><rect x="7" y="7" width="8" height="9" fill="#5a9a55" stroke="#222" /></svg></Cell>
    <Cell w="w-[22px]"><svg width="18" height="18" viewBox="0 0 18 18"><path d="M6 2h6v5h5v5h-5v5H6v-5H1V7h5z" fill="#e8e8e8" stroke="#555" /></svg></Cell>
    <div className="flex-1" />
    <Cell w="w-[36px]"><span className="text-[15px]">模型</span></Cell>
    <Cell w="w-[22px]">{si("M4 3h10v10H4zM3 16h12M7 5l5 6H7z")}</Cell>
    <Cell w="w-[22px]">{si("M3 3h12v9H3zM9 3v9M3 15h12")}</Cell>
    <div className="w-[22px] shrink-0" />
    <Cell w="w-[60px]">
      <svg width="16" height="18" viewBox="0 0 16 18"><path d="M8 1l2 9 5 6-7-3-7 3 5-6z" fill="#eee" stroke="#444" /></svg>
      <span className="ml-[2px] text-[14px] font-['Liberation_Mono',monospace]">1:1</span>
      <div className="ml-[2px] mb-[8px] w-0 h-0 border-x-[3px] border-x-transparent border-t-[4px] border-t-[#111]" />
    </Cell>
    <Cell w="w-[21px]"><svg width="16" height="18" viewBox="0 0 16 18"><path d="M8 1l2 9 5 6-7-3-7 3 5-6z" fill="#eee" stroke="#444" /><circle cx="12" cy="11" r="3" fill="#f0a030" /></svg></Cell>
    <Cell w="w-[21px]"><svg width="16" height="18" viewBox="0 0 16 18"><path d="M8 1l2 9 5 6-7-3-7 3 5-6z" fill="#bbb" stroke="#888" /></svg></Cell>
    <div className="w-[8px] shrink-0" />
    <Cell w="w-[22px]"><Settings size={17} strokeWidth={1.6} color="#222" /></Cell>
    <Cell w="w-[22px]">{si("M4 9h9v7H4zM10 9V5a3 3 0 0 1 6 0M8 11v3")}</Cell>
    <Cell w="w-[22px]"><div className="w-[13px] h-[15px] rounded-full bg-[#777]" /></Cell>
    <div className="w-[47px] h-[22px] shrink-0 bg-[#666] flex items-center justify-around px-[2px]">
      <svg width="18" height="18" viewBox="0 0 18 18"><rect x="2" y="3" width="12" height="11" fill="#f0c040" stroke="#245" /><path d="M6 13l3 3 7-8" stroke="#5a3" strokeWidth="2" fill="none" /></svg>
      <svg width="14" height="18" viewBox="0 0 14 18"><path d="M7 1a5 5 0 0 1 3 9l-1 4H5l-1-4a5 5 0 0 1 3-9z" fill="#f4e59a" stroke="#888" /></svg>
    </div>
    <div className="w-[17px] shrink-0 flex items-center justify-center bg-[#a8a8a8]">
      <div className="w-0 h-0 border-x-[3px] border-x-transparent border-t-[4px] border-t-[#111]" />
    </div>
    <Cell w="w-[22px]"><div className="w-[14px] h-[15px] bg-[#eee] border border-[#444] border-t-2" /></Cell>
  </div>
);

const Taskbar = () => (
  <div className="h-[50px] bg-[#0d0d0d] flex relative">
    <div className="w-[60px] flex items-center justify-center">
      <svg width="20" height="20" viewBox="0 0 20 20" fill="#fff"><path d="M0 3l8-1v7.500H0zM9 2l11-2v9.500H9zM0 10.500h8V18l-8-1zM9 10.500h11V20L9 18z" /></svg>
    </div>
    <div className="w-[59px] flex items-center justify-center">
      <div className="w-[19px] h-[19px] rounded-full border-[3px] border-white" />
    </div>
    <div className="w-[70px] flex items-center justify-center relative">
      <span className="text-[38px] leading-[40px] text-[#2fb5ee] font-['Liberation_Serif',serif] font-bold">e</span>
      <div className="absolute w-[34px] h-[16px] rounded-[50%] border-2 border-[#e9c24a] border-l-transparent border-b-transparent -rotate-[35deg]" />
    </div>
    <div className="w-[54px] flex items-center justify-center">
      <svg width="30" height="32" viewBox="0 0 30 32">
        <circle cx="15" cy="9" r="8" fill="#ef5a9a" />
        <circle cx="23" cy="14" r="7" fill="#f28c28" />
        <circle cx="20" cy="24" r="7" fill="#f4c21f" />
        <circle cx="9" cy="24" r="7" fill="#4cc04a" />
        <circle cx="7" cy="14" r="7" fill="#2f7fe0" />
        <circle cx="15" cy="16" r="5" fill="#e8e8f8" />
      </svg>
    </div>
    <div className="w-[51px] ml-[10px] flex items-center justify-center relative">
      <div className="w-[26px] h-[28px] rounded-[4px] bg-[#1479e6] flex items-center justify-center text-white font-bold text-[15px] font-['Liberation_Sans',sans-serif]">W</div>
      <div className="absolute left-0 right-0 bottom-0 h-[3px] bg-[#76b9ed]" />
    </div>
    <div className="w-[61px] ml-[6px] bg-[#333] flex flex-col items-center relative pt-[8px]">
      <span className="text-[#3d7fc4] font-bold italic text-[20px] leading-[20px] font-['Liberation_Sans',sans-serif]">WJ</span>
      <svg width="30" height="14" viewBox="0 0 30 14" fill="none"><path d="M2 12h14c8 0 8-9 0-9H4" stroke="#9db8d8" strokeWidth="3" /></svg>
      <div className="absolute left-0 right-0 bottom-0 h-[3px] bg-[#76b9ed]" />
    </div>
    <div className="flex-1" />
    <div className="flex items-center text-white">
      <svg className="mr-[11px]" width="16" height="10" viewBox="0 0 16 10" fill="none"><path d="M1 9l7-7 7 7" stroke="#fff" /></svg>
      <div className="mr-[10px] w-[21px] h-[21px] rounded-full bg-[#d8dc2a] flex items-center justify-center text-[#0a7a20] font-bold text-[18px] leading-none font-['Liberation_Sans',sans-serif]">+</div>
      <svg className="mr-[10px]" width="20" height="18" viewBox="0 0 20 18" fill="none" stroke="#ddd"><path d="M2 6h3l4-4v14l-4-4H2zM12 6c1 2 1 4 0 6M15 4c2 3 2 7 0 10" /></svg>
      <svg className="mr-[12px]" width="20" height="12" viewBox="0 0 20 12"><rect x="1" y="1" width="16" height="10" fill="none" stroke="#fff" /><rect x="3" y="3" width="11" height="6" fill="#fff" /><rect x="18" y="4" width="1.500" height="4" fill="#fff" /></svg>
      <svg className="mr-[12px]" width="18" height="18" viewBox="0 0 18 18" fill="none" stroke="#bbb"><path d="M2 16C2 8 8 3 15 2M6 16c0-5 3-8 8-9M10 16c0-2 1-4 4-4" /><circle cx="14" cy="15" r="1" fill="#fff" /></svg>
      <span className="mr-[18px] text-[16px]">中</span>
      <SogouS size="w-[18px] h-[18px]" text="text-[15px] leading-[18px]" />
      <div className="ml-[23px] mr-[15px] text-center text-[#ddd] font-['Liberation_Sans',sans-serif]">
        <div className="text-[16px] leading-[23px]">20:31</div>
        <div className="text-[17px] leading-[23px]">2019/8/13</div>
      </div>
    </div>
  </div>
);

export default function App() {
  return (
    <div className="relative w-[1920px] h-[1080px] overflow-hidden bg-[#666] font-['Noto_Sans_CJK_SC','Liberation_Sans',sans-serif]">
      <div className="h-[31px] bg-white border-b border-[#333] flex items-center pl-[454px] text-[15px] text-[#222] whitespace-pre">
        品茗脚手架工程设计软件 (正式版)V2.1    1.dwg
        <div className="absolute right-0 top-0 flex items-center h-[30px]">
          <svg width="14" height="14" viewBox="0 0 14 14" fill="none" stroke="#aaa" className="mr-[44px]"><path d="M1 7h12" /></svg>
          <svg width="14" height="14" viewBox="0 0 14 14" fill="none" stroke="#aaa" className="mr-[44px]"><path d="M1 3h10v10H1zM3 3V1h10v10h-2" /></svg>
          <svg width="14" height="14" viewBox="0 0 14 14" fill="none" stroke="#999" className="mr-[25px]"><path d="M1 1l12 12M13 1L1 13" /></svg>
        </div>
      </div>
      <div className="h-[25px] pl-[56px] bg-gradient-to-b from-[#979797] to-[#555] text-[15.500px] leading-[23px] text-[#e4e4e4] flex gap-[25px] whitespace-nowrap relative">
        {["工程(F)", "视图(V)", "CAD转化(D)", "建模(M)", "脚手架(J)", "图纸方案(P)", "编辑(E)", "属性(A)", "工具(T)", "云平台(Y)", "帮助(H)"].map((t) => (
          <span key={t}>{t}</span>
        ))}
        <div className="absolute right-[6px] top-[3px] flex items-center gap-[4px]">
          <svg width="12" height="14" viewBox="0 0 12 14" fill="none" stroke="#111" strokeWidth="2"><path d="M1 12h9" /></svg>
          <svg width="13" height="14" viewBox="0 0 13 14" fill="none" stroke="#111" strokeWidth="1.500"><path d="M1 5h8v8H1zM4 5V2h8v8H9" /></svg>
          <svg width="11" height="14" viewBox="0 0 11 14" fill="none" stroke="#111" strokeWidth="2"><path d="M1 3l9 9M10 3l-9 9" /></svg>
        </div>
      </div>
      <div className="h-[37px] bg-gradient-to-b from-[#7a7a7a] via-[#929292] to-[#8a8a8a] border-b-[5px] border-[#666] relative">
        <div className="absolute left-[20px] top-[4px] w-[165px] h-[28px] rounded-t-[10px] bg-gradient-to-b from-[#b8b8b8] to-[#8f8f8f] pl-[21px] text-[16px] leading-[28px] text-[#222]">
          1*
          <span className="absolute left-[136px] top-0 text-[#bbb] font-bold font-['Liberation_Sans',sans-serif]">×</span>
        </div>
        <div className="absolute left-[190px] top-[9px] w-[27px] h-[18px] rounded-t-[6px] bg-[#7c7c7c] border border-[#555] flex items-center justify-center text-[14px] leading-none text-[#bbb] font-bold">+</div>
      </div>
      <Ribbon />
      <Toolbars />
      <div className="h-[2px] bg-[#aaa]" />
      <div className="h-[781px] flex">
        <LeftPanel />
        <MidPanel />
        <div className="ml-[6px] flex-1 flex flex-col min-w-0">
          <div className="h-[691px] bg-black relative">
            <Drawing />
          </div>
          <LayoutTabs />
          <div className="h-[5px] bg-[#666] border-t border-white" />
          <CommandLine />
        </div>
      </div>
      <div className="border-t border-[#333] -mt-[1px]">
        <StatusBar />
      </div>
      <Taskbar />

      {/* things floating over the window */}
      <div className="absolute left-0 top-0 w-[41px] h-[40px] bg-gradient-to-b from-[#6a6a6a] to-[#9a9a9a] border border-[#222] flex items-center pl-[3px]">
        <svg width="28" height="34" viewBox="0 0 26 32">
          <path d="M13 1l12 28-5 2-4-9-9 9-6-2z" fill="#c8141a" />
          <path d="M13 1l3 21-9 9z" fill="#ee3a30" />
        </svg>
        <div className="ml-[1px] w-0 h-0 border-x-[3px] border-x-transparent border-t-[4px] border-t-[#222]" />
      </div>
      <div className="absolute left-[1897px] top-[172px] w-[55px] h-[55px] rounded-full bg-[#3ec552] border-[3px] border-[#eef5ee] pl-[3px] text-[14px] leading-[49px] font-bold text-white font-['Liberation_Sans',sans-serif]">64</div>
      <ViewCube />
      <div className="absolute left-[1803px] top-[830px] w-[48px] h-[48px] rounded-full bg-[#3f8ee8] border-2 border-[#c4d8ea] text-center text-[15px] leading-[44px] text-[#b4d6f8] font-['Liberation_Sans',sans-serif]">03:15</div>
      <SogouBar />
    </div>
  );
}
